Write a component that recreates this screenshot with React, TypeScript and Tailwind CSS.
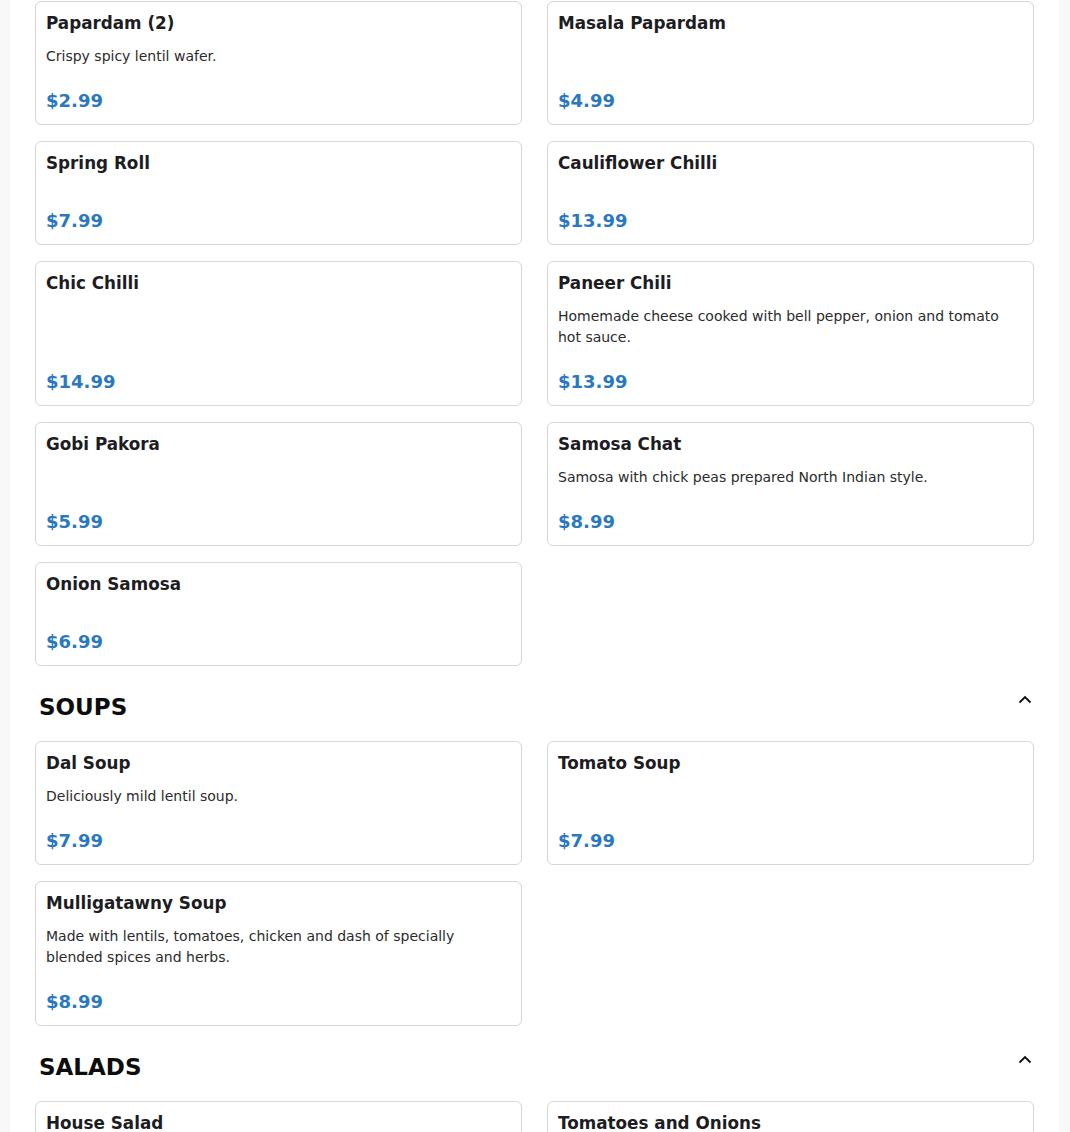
type Item = { name: string; description?: string; price: string };

type Section = { title?: string; items: Item[] };

const SECTIONS: Section[] = [
  {
    items: [
      { name: 'Papardam (2)', description: 'Crispy spicy lentil wafer.', price: '$2.99' },
      { name: 'Masala Papardam', price: '$4.99' },
      { name: 'Spring Roll', price: '$7.99' },
      { name: 'Cauliflower Chilli', price: '$13.99' },
      { name: 'Chic Chilli', price: '$14.99' },
      {
        name: 'Paneer Chili',
        description: 'Homemade cheese cooked with bell pepper, onion and tomato hot sauce.',
        price: '$13.99',
      },
      { name: 'Gobi Pakora', price: '$5.99' },
      { name: 'Samosa Chat', description: 'Samosa with chick peas prepared North Indian style.', price: '$8.99' },
      { name: 'Onion Samosa', price: '$6.99' },
    ],
  },
  {
    title: 'SOUPS',
    items: [
      { name: 'Dal Soup', description: 'Deliciously mild lentil soup.', price: '$7.99' },
      { name: 'Tomato Soup', price: '$7.99' },
      {
        name: 'Mulligatawny Soup',
        description: 'Made with lentils, tomatoes, chicken and dash of specially blended spices and herbs.',
        price: '$8.99',
      },
    ],
  },
  {
    title: 'SALADS',
    items: [
      { name: 'House Salad', description: 'Fresh greens with house dressing.', price: '$6.99' },
      { name: 'Tomatoes and Onions', description: 'Sliced tomatoes and onions with lemon.', price: '$4.99' },
    ],
  },
];

function ChevronUp() {
  return (
    <svg width="14" height="9" viewBox="0 0 14 9" fill="none" className="mt-[2px]">
      <path d="M1.5 7.5L7 2L12.5 7.5" stroke="#111" strokeWidth="1.9" />
    </svg>
  );
}

function MenuCard({ item }: { item: Item }) {
  return (
    <div className="flex flex-col rounded-[6px] border border-[#d6d6d6] bg-white px-[10px] pt-[8px] pb-[10px]">
      <h3 className="text-[16.8px] leading-[26px] font-bold text-[#1d1d1f]">{item.name}</h3>
      {item.description && (
        <p className="mt-[10px] text-[14px] leading-[21px] text-[#2b2b2b]">{item.description}</p>
      )}
      <div
        className={`mt-auto text-[18px] leading-[26px] font-bold text-[#2a78c2] ${
          item.description ? 'pt-[21px]' : 'pt-[32px]'
        }`}
      >
        {item.price}
      </div>
    </div>
  );
}

export default function App() {
  return (
    <div className="min-h-screen bg-[#f8f8f8]" style={{ fontFamily: '"DejaVu Sans", sans-serif' }}>
      <div className="ml-[10px] mr-[11px] bg-white px-[25px] pt-px pb-10">
        {SECTIONS.map((section, i) => (
          <div key={i}>
            {section.title && (
              <div className="mt-[27px] mb-[20px] flex items-start justify-between pl-1 pr-[2px]">
                <h2 className="text-[23px] leading-[28px] font-bold text-[#0d0d0d]">{section.title}</h2>
                <ChevronUp />
              </div>
            )}
            <div className="grid grid-cols-2 gap-x-[25px] gap-y-4">
              {section.items.map((item) => (
                <MenuCard key={item.name} item={item} />
              ))}
            </div>
          </div>
        ))}
      </div>
    </div>
  );
}
